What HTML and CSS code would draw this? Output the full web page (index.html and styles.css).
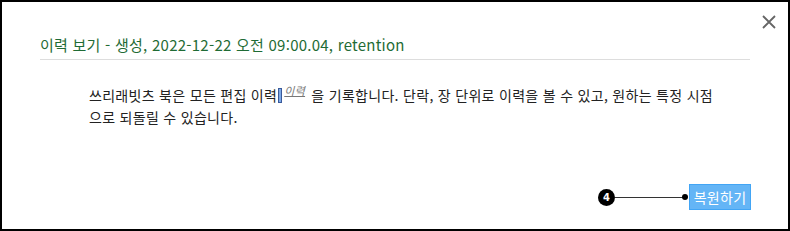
FILE: index.html
```html
<!DOCTYPE html>
<html lang="ko">
<head>
<meta charset="utf-8">
<link rel="stylesheet" href="styles.css">
</head>
<body>
<div class="modal">
  <button class="close" aria-label="닫기">
    <svg width="16" height="16" viewBox="0 0 16 16"><path d="M2 2 L14 14 M14 2 L2 14" stroke="#666" stroke-width="1.8" fill="none"/></svg>
  </button>
  <div class="header">
    <h2 class="title">이력 보기 - 생성, 2022-12-22 오전 09:00.04, retention</h2>
  </div>
  <div class="body">
    <p class="text">쓰리래빗츠 북은 모든 편집 이력<span class="mark"></span><span class="note">이력</span> 을 기록합니다. 단락, 장 단위로 이력을 볼 수 있고, 원하는 특정 시점으로 되돌릴 수 있습니다.</p>
  </div>
  <div class="footer">
    <span class="badge">4</span>
    <span class="leader"></span>
    <span class="dot"></span>
    <button class="restore">복원하기</button>
  </div>
</div>
</body>
</html>
```
FILE: styles.css
```css
* { box-sizing: border-box; }
html, body { margin: 0; padding: 0; background: #fff; }
body { font-family: "Noto Sans CJK KR", "Noto Sans", sans-serif; }
.modal {
  position: relative;
  width: 790px;
  height: 231px;
  border: 2px solid #000;
  background: #fff;
  display: flex;
  flex-direction: column;
}
.close {
  position: absolute;
  top: 12px;
  right: 11px;
  width: 16px;
  height: 16px;
  padding: 0;
  border: 0;
  background: none;
  display: flex;
}
.header {
  margin: 0 38px 0 38px;
  padding-top: 32px;
  border-bottom: 1px solid #ddd;
}
.title {
  margin: 0;
  font-size: 15px;
  letter-spacing: 0.25px;
  font-weight: normal;
  line-height: 22px;
  padding-bottom: 3px;
  color: #1f6b35;
}
.body {
  padding: 24px 0 0 87px;
}
.text {
  margin: 0;
  width: 636px;
  font-size: 14px;
  letter-spacing: 0.3px;
  line-height: 22px;
  color: #222;
}
.mark {
  display: inline-block;
  width: 4px;
  height: 15px;
  line-height: 1;
  vertical-align: -2px;
  background: #7da9e8;
  border: 1px solid #3a5a9a;
  margin-left: 1px;
}
.note {
  font-size: 11px;
  line-height: 1;
  font-style: italic;
  color: #777;
  text-decoration: underline;
  vertical-align: 6px;
  margin-left: 2px;
  margin-right: 2px;
}
.footer {
  margin-top: auto;
  margin-bottom: 19px;
  margin-right: 37px;
  display: flex;
  justify-content: flex-end;
  align-items: center;
}
.badge {
  width: 17px;
  height: 17px;
  border-radius: 50%;
  background: #000;
  color: #fff;
  font-family: "DejaVu Sans", sans-serif;
  font-weight: bold;
  font-size: 10px;
  display: flex;
  align-items: center;
  justify-content: center;
}
.leader {
  width: 68px;
  height: 1px;
  background: #333;
}
.dot {
  width: 6px;
  height: 6px;
  border-radius: 50%;
  background: #000;
  margin-left: -1px;
}
.restore {
  width: 62px;
  height: 26px;
  margin-left: 1px;
  padding: 0;
  border: 1px solid #42a5f5;
  background: #64b5f6;
  color: #fff;
  font-family: inherit;
  font-size: 14px;
  letter-spacing: 0.3px;
  line-height: 24px;
}
```
